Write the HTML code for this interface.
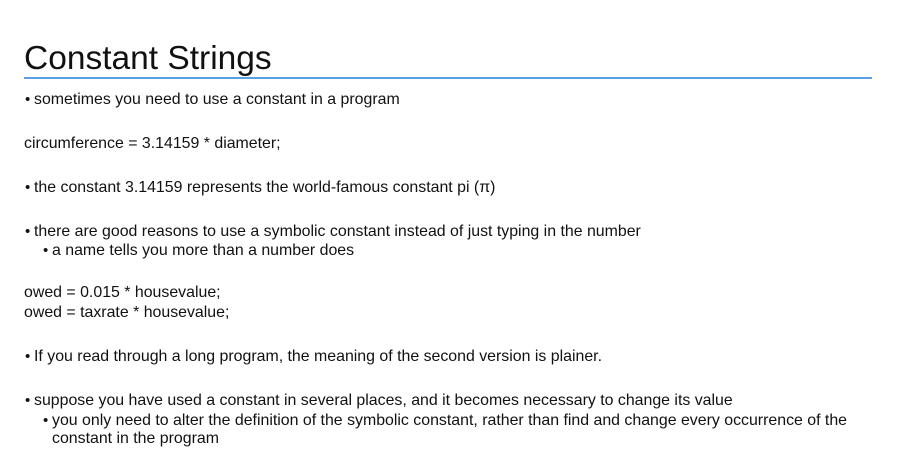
<!DOCTYPE html>
<html><head><meta charset="utf-8"><style>
body{margin:0;width:905px;height:457px;background:#fff;position:relative;overflow:hidden;font-family:"Liberation Sans",Arial,sans-serif;color:#111}
.t{position:absolute;font-size:15.9px;line-height:18px;white-space:nowrap}
.b::before{content:"•";position:absolute;left:-9px;font-size:15px}
h1{position:absolute;left:24px;top:40px;margin:0;font-weight:normal;font-size:33.5px;line-height:38px;color:#111}
.rule{position:absolute;left:24px;top:77px;width:848px;height:2px;background:#5a9fe4}
</style></head><body>
<h1>Constant Strings</h1>
<div class="rule"></div>
<div class="t b" style="left:34px;top:91px">sometimes you need to use a constant in a program</div>
<div class="t" style="left:24px;top:135px">circumference = 3.14159 * diameter;</div>
<div class="t b" style="left:34px;top:179px">the constant 3.14159 represents the world-famous constant pi (π)</div>
<div class="t b" style="left:34px;top:223px">there are good reasons to use a symbolic constant instead of just typing in the number</div>
<div class="t b" style="left:52px;top:242px">a name tells you more than a number does</div>
<div class="t" style="left:24px;top:284px">owed = 0.015 * housevalue;</div>
<div class="t" style="left:24px;top:304px">owed = taxrate * housevalue;</div>
<div class="t b" style="left:34px;top:348px">If you read through a long program, the meaning of the second version is plainer.</div>
<div class="t b" style="left:34px;top:392px">suppose you have used a constant in several places, and it becomes necessary to change its value</div>
<div class="t b" style="left:52px;top:412px">you only need to alter the definition of the symbolic constant, rather than find and change every occurrence of the</div>
<div class="t" style="left:52px;top:430px">constant in the program</div>
</body></html>
